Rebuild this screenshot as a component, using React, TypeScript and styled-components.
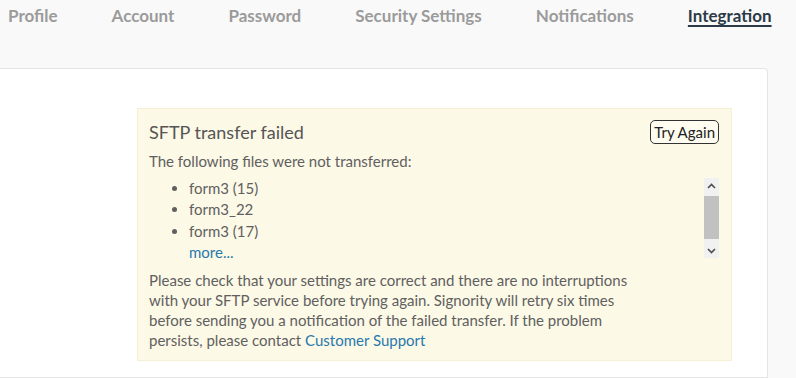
import React from "react";
import styled, { createGlobalStyle } from "styled-components";

const Global = createGlobalStyle`
  html, body { margin: 0; padding: 0; background: #f9f9f9; }
  body { font-family: Lato, "Open Sans", sans-serif; overflow: hidden; }
`;

const Page = styled.div`
  width: 796px;
  height: 378px;
  display: flex;
  flex-direction: column;
  overflow: hidden;
`;

const Tabs = styled.nav`
  display: flex;
  gap: 54px;
  padding: 5px 0 0 8px;
  height: 68px;
  flex-shrink: 0;
  box-sizing: border-box;
`;

const Tab = styled.a<{ $active?: boolean }>`
  font-size: 17px;
  line-height: 22px;
  font-weight: 700;
  color: ${(p) => (p.$active ? "#2c3a47" : "#9b9b9b")};
  text-decoration: ${(p) => (p.$active ? "underline" : "none")};
  text-decoration-thickness: 2px;
  text-underline-offset: 3px;
  white-space: nowrap;
`;

const Card = styled.div`
  width: 768px;
  flex: 1;
  background: #fff;
  border: 1px solid #e4e4e4;
  border-left: none;
  border-radius: 0 4px 0 0;
  padding: 39px 0 0 137px;
  box-sizing: border-box;
`;

const Alert = styled.div`
  width: 595px;
  height: 253px;
  box-sizing: border-box;
  background: #fdf9e7;
  border: 1px solid #f6efd3;
  padding: 11px 12px 0 11px;
  color: #606060;
  font-size: 15px;
`;

const Header = styled.div`
  display: flex;
  justify-content: space-between;
  align-items: flex-start;
`;

const Title = styled.h3`
  margin: 0;
  font-size: 18px;
  font-weight: 400;
  color: #555;
  line-height: 24px;
`;

const Button = styled.button`
  font-family: Lato, sans-serif;
  font-size: 15px;
  color: #222;
  background: #fffcf0;
  border: 1px solid #333;
  border-radius: 5px;
  padding: 0 3px;
  height: 24px;
  line-height: 20px;
`;

const Intro = styled.p`
  margin: 7px 0 7px;
  line-height: 20px;
`;

const ScrollBox = styled.div`
  height: 80px;
  width: 570px;
  display: flex;
`;

const Viewport = styled.div`
  flex: 1;
`;

const List = styled.ul`
  margin: 0;
  padding-left: 40px;
  line-height: 21.3px;
`;

const Item = styled.li``;

const MoreItem = styled.li`
  list-style: none;
`;

const Link = styled.a`
  color: #2878ad;
  text-decoration: none;
`;

const Track = styled.div`
  width: 15px;
  display: flex;
  flex-direction: column;
  background: #f1f1f1;
`;

const ArrowBtn = styled.div`
  height: 15px;
  display: flex;
  align-items: center;
  justify-content: center;
`;

const TrackBody = styled.div`
  flex: 1;
  padding: 3px 0 4px;
  display: flex;
  flex-direction: column;
`;

const Thumb = styled.div`
  height: 43px;
  background: #c1c1c1;
`;

const Body = styled.p`
  margin: 12px 0 0;
  line-height: 20px;
  width: 490px;
`;

const Chevron = ({ up }: { up?: boolean }) => (
  <svg width="9" height="6" viewBox="0 0 9 6">
    <path
      d={up ? "M1 5 L4.5 1.5 L8 5" : "M1 1 L4.5 4.5 L8 1"}
      fill="none"
      stroke="#505050"
      strokeWidth="1.7"
    />
  </svg>
);

export default function App() {
  const tabs = ["Profile", "Account", "Password", "Security Settings", "Notifications", "Integration"];
  return (
    <Page>
      <Global />
      <Tabs>
        {tabs.map((t) => (
          <Tab key={t} $active={t === "Integration"}>
            {t}
          </Tab>
        ))}
      </Tabs>
      <Card>
        <Alert>
          <Header>
            <Title>SFTP transfer failed</Title>
            <Button>Try Again</Button>
          </Header>
          <Intro>The following files were not transferred:</Intro>
          <ScrollBox>
            <Viewport>
              <List>
                <Item>form3 (15)</Item>
                <Item>form3_22</Item>
                <Item>form3 (17)</Item>
                <MoreItem>
                  <Link>more...</Link>
                </MoreItem>
              </List>
            </Viewport>
            <Track>
              <ArrowBtn>
                <Chevron up />
              </ArrowBtn>
              <TrackBody>
                <Thumb />
              </TrackBody>
              <ArrowBtn>
                <Chevron />
              </ArrowBtn>
            </Track>
          </ScrollBox>
          <Body>
            Please check that your settings are correct and there are no interruptions with your SFTP service
            before trying again. Signority will retry six times before sending you a notification of the failed
            transfer. If the problem persists, please contact <Link>Customer Support</Link>
          </Body>
        </Alert>
      </Card>
    </Page>
  );
}
